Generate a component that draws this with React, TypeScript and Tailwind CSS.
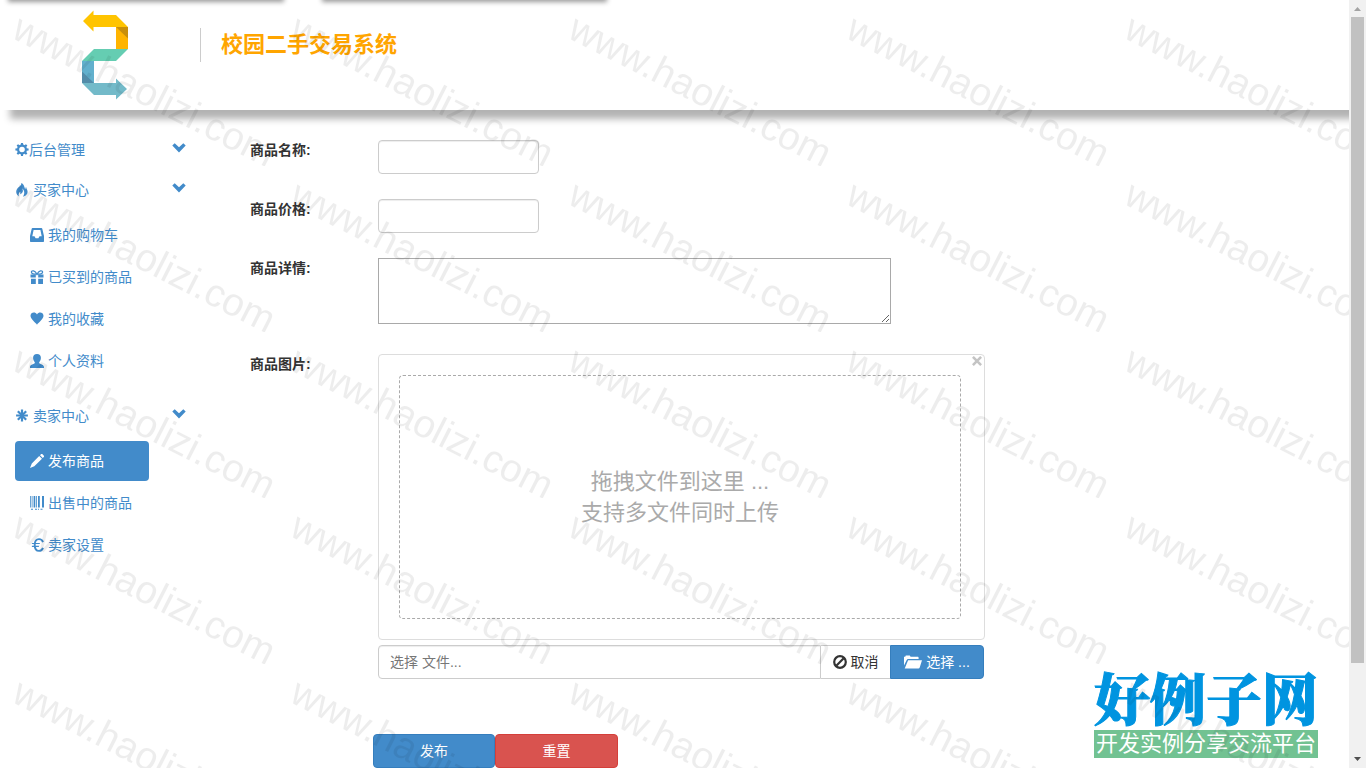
import type { ReactNode } from "react";

type IconProps = { children: ReactNode; className?: string; box?: string };

function Icon({ children, className = "size-[14px]", box = "0 0 14 14" }: IconProps) {
  return (
    <svg viewBox={box} className={`shrink-0 ${className}`} fill="currentColor" aria-hidden="true">
      {children}
    </svg>
  );
}

const CogIcon = () => (
  <Icon>
    <circle cx="7" cy="6.500" r="3.900" fill="none" stroke="currentColor" strokeWidth="2.200" />
    {[0, 45, 90, 135].map((a) => (
      <path key={a} transform={`rotate(${a} 7 6.500)`} d="M6-.1h2l.3 2.400H5.700zM5.700 10.700h2.600L8 13.100H6z" />
    ))}
  </Icon>
);

const FireIcon = () => (
  <Icon>
    <path d="M6.300 0C6.600 2.600 3.800 3.600 2.200 5.800 .5 8.300 1 11.400 3.900 13.400 3.200 11.200 4.100 9.700 5.200 8.500 5.500 9.700 5.100 10.400 5.500 11.300 8 9.800 8.600 7.700 7.200 5.500 9.800 7.400 9.900 10.900 7.900 13.800 11.900 12.800 13.600 9.600 12 6.500 11.600 5.700 11.200 5.100 11.100 4 10.400 4.800 10.500 5.500 10.300 6.300 9.200 3.900 9.300 1.500 6.300 0z" />
  </Icon>
);

const InboxIcon = () => (
  <Icon>
    <path
      fillRule="evenodd"
      d="M2.600 0h8.800c.5 0 .8.300.9.700L14 8v5.300c0 .4-.3.700-.7.700H.7c-.4 0-.7-.3-.7-.7V8L1.700.7c.1-.4.4-.7.9-.7zM3.600 2 2.300 8.200h2.200l1.100 2.100h2.800l1.100-2.100h2.200L10.400 2z"
    />
  </Icon>
);

const GiftIcon = () => (
  <Icon>
    <path d="M.5 4.500h5.300v3H.5zM8.200 4.500h5.300v3H8.200zM1 8.700h4.800V14H1zM8.200 8.700H13V14H8.200z" />
    <path d="M7 4.200C4.400 4.300 1.200 3.900 1.400 2 1.700.2 5 .1 7 4.200 9 .1 12.300.2 12.600 2 12.800 3.900 9.600 4.300 7 4.200z" fill="none" stroke="currentColor" strokeWidth="1.300" />
  </Icon>
);

const HeartIcon = () => (
  <Icon>
    <path d="M7 12.700C5.800 10.700.5 7.300.5 3.800.5.200 5.300-.7 7 2.500c1.700-3.200 6.500-2.300 6.500 1.300C13.500 7.300 8.200 10.700 7 12.700z" />
  </Icon>
);

const UserIcon = () => (
  <Icon>
    <path d="M7 0c2.600 0 3.900 1.500 3.900 3.800 0 1.900-.7 3.500-1.700 4.400v1c1.500 1 4.800 1.500 4.800 3.700V14H0v-1.100c0-2.200 3.300-2.700 4.800-3.700v-1C3.800 7.300 3.100 5.700 3.100 3.800 3.100 1.500 4.400 0 7 0z" />
  </Icon>
);

const AsteriskIcon = () => (
  <Icon>
    {[0, 45, 90, 135].map((a) => (
      <path key={a} transform={`rotate(${a} 7 6.500)`} d="M5.900.6h2.200v3.200L7.600 6.500l.5 2.700v3.200H5.900V9.200l.5-2.700-.5-2.700z" />
    ))}
    <circle cx="7" cy="6.500" r="2.300" />
  </Icon>
);

const PencilIcon = () => (
  <Icon>
    <path d="M10.900.300c.5-.5 1.100-.5 1.600 0l1.200 1.200c.5.500.5 1.100 0 1.600l-.9.900L10 1.200zM9.200 2l2.800 2.800-7.700 7.400L0 14l1.800-4.600z" />
  </Icon>
);

const BarcodeIcon = () => (
  <Icon>
    <path d="M0 0h.8v11.500H0zM1.700 0h.8v11.500h-.8zM3.600 0h1.700v11.500H3.600zM6.200 0h.8v11.500h-.8zM8 0h1.800v11.500H8zM12 0h2v11.500h-2zM1 12.800h2v1H1zM5 12.800h2v1H5zM8 12.800h1v1H8zM10.500 12.800h2v1h-2z" />
  </Icon>
);

const EuroIcon = () => (
  <Icon>
    <path d="M13 4.100C12.400 2.200 11 1.100 9 1.100 6.200 1.100 4.700 3.400 4.700 7s1.500 5.900 4.300 5.900c2 0 3.400-1.100 4-3" fill="none" stroke="currentColor" strokeWidth="1.900" />
    <path d="M2.200 4.900h7.900l-.6 1.200H1.700zM1.900 7.700h7.400l-.6 1.200H1.900z" />
  </Icon>
);

const ChevronIcon = () => (
  <Icon>
    <path d="M.3 4.600 2.700 2.200 7 6.300l4.300-4.100 2.400 2.400L7 11.400z" />
  </Icon>
);

const BanIcon = () => (
  <Icon>
    <circle cx="7" cy="7" r="5.800" fill="none" stroke="currentColor" strokeWidth="2.200" />
    <path d="M3.300 10.700 10.700 3.300" stroke="currentColor" strokeWidth="2.200" />
  </Icon>
);

const FolderIcon = () => (
  <Icon className="h-[14px] w-[18px]" box="0 0 18 14">
    <path d="M0 10.500V1.800h1.200L1.800.5h4l.8 1.300h7c.6 0 1 .4 1 1v1.300H4.300c-.8 0-1.400.4-1.700 1.100z" />
    <path d="M4.100 5.200H18l-2.300 7.400c-.2.600-.6.900-1.200.9H.7z" />
  </Icon>
);

const CloseIcon = () => (
  <Icon className="size-[10px]" box="0 0 10 10">
    <path d="M.9.900 9.100 9.100M9.100.900.9 9.100" stroke="currentColor" strokeWidth="2.600" />
  </Icon>
);

function Logo() {
  return (
    <svg viewBox="0 0 46 90" className="h-[90px] w-[46px] shrink-0" role="img" aria-label="logo">
      <path fill="#ffc400" d="M1 11 11.500.5V5H34l12 12H11.500v4.500z" />
      <path fill="#ffb400" d="M34 17h12v22H34z" />
      <path fill="#c98f0a" d="M34 17h12v11.500z" />
      <path fill="#62b0cd" d="M0 51h12v22H0z" />
      <path fill="#65cdb2" d="M12 39h34L34 51H0z" />
      <path fill="#538ca9" d="M0 61.500 12 73H0z" />
      <path fill="#73bac9" d="M0 73h34v-4.500L45 79 34 89.500V85H12z" />
    </svg>
  );
}

type Entry = { label: string; icon: ReactNode; active?: boolean };

function Section({ label, icon, tight, items }: { label: string; icon: ReactNode; tight?: boolean; items?: Entry[] }) {
  return (
    <section>
      <a href="#" className={`flex h-5 items-center pr-[14px] ${tight ? "" : "gap-1"}`}>
        {icon}
        <span>{label}</span>
        <span className="mb-1 ml-auto">
          <ChevronIcon />
        </span>
      </a>
      {items && (
        <ul className="mt-[15px] mb-[25px] flex w-[134px] flex-col gap-[2px]">
          {items.map((item) => (
            <li key={item.label}>
              <a
                href="#"
                className={`flex h-10 items-center gap-1 rounded px-[15px] whitespace-nowrap ${item.active ? "bg-[#428bca] text-white" : ""}`}
              >
                {item.icon}
                {item.label}
              </a>
            </li>
          ))}
        </ul>
      )}
    </section>
  );
}

function Sidebar() {
  return (
    <nav className="w-[200px] shrink-0 pl-[15px] text-[#428bca]">
      <Section label="后台管理" icon={<CogIcon />} tight />
      <div className="h-5" />
      <Section
        label="买家中心"
        icon={<FireIcon />}
        items={[
          { label: "我的购物车", icon: <InboxIcon /> },
          { label: "已买到的商品", icon: <GiftIcon /> },
          { label: "我的收藏", icon: <HeartIcon /> },
          { label: "个人资料", icon: <UserIcon /> },
        ]}
      />
      <Section
        label="卖家中心"
        icon={<AsteriskIcon />}
        items={[
          { label: "发布商品", icon: <PencilIcon />, active: true },
          { label: "出售中的商品", icon: <BarcodeIcon /> },
          { label: "卖家设置", icon: <EuroIcon /> },
        ]}
      />
    </nav>
  );
}

function Field({ id, label, children }: { id: string; label: string; children: ReactNode }) {
  return (
    <div className="flex items-start">
      <label htmlFor={id} className="w-32 shrink-0 font-bold text-[#333]">
        {label}
      </label>
      {children}
    </div>
  );
}

const inputStyle = "h-[34px] border border-[#ccc] bg-white px-[11px] shadow-[inset_0_1px_1px_rgba(0,0,0,0.075)] outline-none";

function PublishForm() {
  return (
    <form className="ml-[50px] flex min-w-0 flex-1 flex-col" onSubmit={(e) => e.preventDefault()}>
      <div className="flex flex-col gap-[25px]">
        <Field id="name" label="商品名称:">
          <input id="name" type="text" className={`w-[161px] rounded ${inputStyle}`} />
        </Field>
        <Field id="price" label="商品价格:">
          <input id="price" type="text" className={`w-[161px] rounded ${inputStyle}`} />
        </Field>
        <Field id="detail" label="商品详情:">
          <textarea id="detail" className="h-[66px] w-[513px] border border-[#a9a9a9] bg-white p-[2px] outline-none" />
        </Field>
      </div>
      <div className="mt-[30px]">
        <Field id="file" label="商品图片:">
          <div className="w-[607px]">
            <div className="relative rounded border border-[#ddd] py-5 pr-[23px] pl-5">
              <button type="button" aria-label="关闭" className="absolute top-[1px] right-[2px] text-[#c4c4c4]">
                <CloseIcon />
              </button>
              <div className="flex h-[244px] items-center justify-center rounded border border-dashed border-[#aaa] text-center text-[22px] leading-[31px] text-[#aaa]">
                <p>
                  拖拽文件到这里 ...
                  <br />
                  支持多文件同时上传
                </p>
              </div>
            </div>
            <div className="mt-[5px] mr-[1px] flex">
              <input
                id="file"
                type="text"
                placeholder="选择 文件..."
                className={`min-w-0 flex-1 rounded-l placeholder:text-[#777] ${inputStyle}`}
              />
              <button type="button" className="flex h-[34px] w-[69px] items-center justify-center gap-1 border-y border-[#ccc] text-[#333]">
                <BanIcon />
                取消
              </button>
              <button
                type="button"
                className="flex h-[34px] w-[94px] items-center justify-center gap-1 rounded-r border border-[#357ebd] bg-[#428bca] text-white"
              >
                <FolderIcon />
                选择 ...
              </button>
            </div>
          </div>
        </Field>
      </div>
      <div className="mt-[55px] ml-[123px] flex">
        <button type="submit" className="h-[34px] w-[122px] rounded border border-[#357ebd] bg-[#428bca] text-white">
          发布
        </button>
        <button type="reset" className="h-[34px] w-[123px] rounded border border-[#d43f3a] bg-[#d9534f] text-white">
          重置
        </button>
      </div>
    </form>
  );
}

function Header() {
  return (
    <header className="flex h-[110px] shrink-0 flex-col bg-white shadow-[10px_9px_7px_#b3b3b3]">
      <div className="-mt-[10px] flex h-[10px] gap-[38px] pl-2">
        <div className="w-[276px] shadow-[0_2px_5px_#999]" />
        <div className="w-[285px] shadow-[0_2px_5px_#999]" />
      </div>
      <div className="flex pt-[10px] pl-[82px]">
        <Logo />
        <div className="mt-[18px] ml-[72px] flex h-[34px] items-center border-l border-[#ccc] pl-5">
          <h1 className="text-[22px] font-bold text-[#ffa500]">校园二手交易系统</h1>
        </div>
      </div>
    </header>
  );
}

function Brand() {
  return (
    <div className="absolute right-[31px] bottom-[10px] w-[224px] whitespace-nowrap">
      <div className="font-['Noto_Serif_CJK_SC','Noto_Sans_CJK_SC',serif] text-[56px] leading-[68px] font-black text-[#0094e0] [-webkit-text-stroke:1px_#0094e0]">
        好例子网
      </div>
      <div className="bg-[#72c292] text-center text-[22px] leading-[28px] text-white">开发实例分享交流平台</div>
    </div>
  );
}

function Watermark() {
  return (
    <svg className="pointer-events-none absolute inset-0 h-full w-full" aria-hidden="true">
      <defs>
        <pattern id="mark" width="278" height="166" patternUnits="userSpaceOnUse">
          <text
            transform="translate(10 37) rotate(27)"
            fontFamily="Liberation Sans, Arial, sans-serif"
            fontSize="39"
            fill="#000"
            fillOpacity="0.07"
          >
            www.haolizi.com
          </text>
        </pattern>
      </defs>
      <rect width="100%" height="100%" fill="url(#mark)" />
    </svg>
  );
}

function ScrollTrack() {
  return (
    <div className="flex w-[17px] shrink-0 flex-col items-center bg-[#f1f1f1]" aria-hidden="true">
      <svg viewBox="0 0 17 17" className="size-[17px] shrink-0">
        <path d="M5 11h7L8.500 7z" fill="#a3a3a3" />
      </svg>
      <div className="flex w-[13px] flex-1 flex-col">
        <div className="h-[88%] bg-[#c1c1c1]" />
      </div>
      <svg viewBox="0 0 17 17" className="size-[17px] shrink-0">
        <path d="M5 6h7l-3.500 4z" fill="#505050" />
      </svg>
    </div>
  );
}

export default function App() {
  return (
    <div
      lang="zh-CN"
      className="flex h-screen overflow-hidden bg-white font-['Liberation_Sans','Noto_Sans_CJK_SC',sans-serif] text-[14px] leading-5"
    >
      <div className="relative flex min-w-0 flex-1 flex-col overflow-hidden">
        <Header />
        <main className="flex pt-[30px]">
          <Sidebar />
          <PublishForm />
        </main>
        <Brand />
        <Watermark />
      </div>
      <ScrollTrack />
    </div>
  );
}
